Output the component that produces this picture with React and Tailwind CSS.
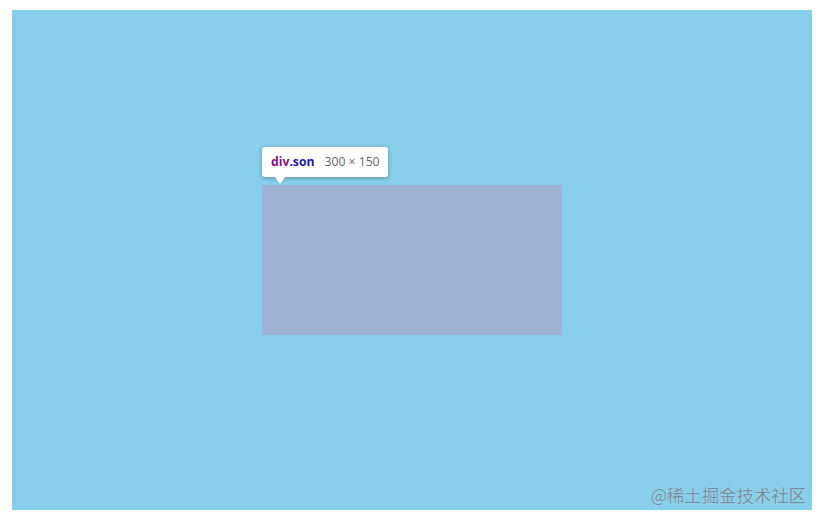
export default function App() {
  return (
    <div className="min-h-screen w-[823px] h-[519px] bg-white pl-[12px] pt-[10px]">
      {/* father */}
      <div className="relative flex h-[500px] w-[800px] items-center justify-center bg-[#87ceeb]">
        {/* son */}
        <div className="relative h-[150px] w-[300px] bg-[#a0b1d6]">
          {/* devtools hover tooltip */}
          <div className="absolute left-0 top-[-38px] flex h-[30px] items-center gap-[10px] whitespace-nowrap rounded-[3px] bg-white pl-[9px] pr-[8px] font-['Open_Sans',sans-serif] text-[12.2px] shadow-[0_1px_4px_rgba(0,0,0,0.3)]">
            <span className="font-bold">
              <span className="text-[#881280]">div</span>
              <span className="text-[#1a1aa6]">.son</span>
            </span>
            <span className="text-[#666]">300 × 150</span>
            <div className="absolute left-[12px] top-[29px] h-0 w-0 border-x-[6px] border-t-[8px] border-x-transparent border-t-white" />
          </div>
        </div>
        {/* watermark */}
        <div className="absolute bottom-[7px] right-[6px] whitespace-nowrap font-['Noto_Sans_CJK_SC',sans-serif] text-[17.4px] leading-none text-[#7290a6] [text-shadow:0_0_1px_rgba(255,255,255,0.6)]">
          @稀土掘金技术社区
        </div>
      </div>
    </div>
  );
}
